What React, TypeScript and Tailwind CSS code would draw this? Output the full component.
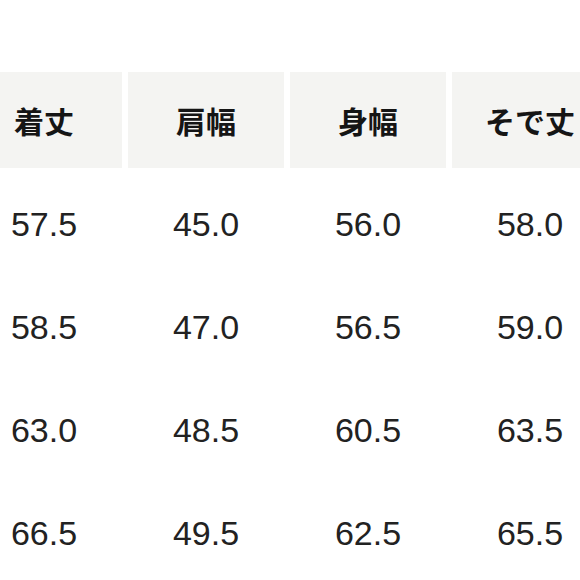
const headers = ["着丈", "肩幅", "身幅", "そで丈"]

const rows = [
  ["57.5", "45.0", "56.0", "58.0"],
  ["58.5", "47.0", "56.5", "59.0"],
  ["63.0", "48.5", "60.5", "63.5"],
  ["66.5", "49.5", "62.5", "65.5"],
]

export default function App() {
  return (
    <div className="w-[580px] h-[580px] overflow-hidden bg-white">
      <div className="pt-[72px] -ml-[34px] w-[642px]">
        {/* Header */}
        <div className="grid grid-cols-[156px_156px_156px_156px] gap-x-[6px] h-[96px]">
          {headers.map((h) => (
            <div
              key={h}
              className="flex items-center justify-center bg-[#f4f4f2] text-[30px] font-bold text-[#151515] font-['Noto_Sans_CJK_JP',sans-serif]"
            >
              {h}
            </div>
          ))}
        </div>

        {/* Rows */}
        <div className="mt-[5px] flex flex-col">
          {rows.map((row, i) => (
            <div key={i} className="grid grid-cols-[156px_156px_156px_156px] gap-x-[6px] h-[103px]">
              {row.map((v, j) => (
                <div
                  key={j}
                  className="flex items-center justify-center text-[34px] text-[#222] font-['Liberation_Sans',Arial,sans-serif]"
                >
                  {v}
                </div>
              ))}
            </div>
          ))}
        </div>
      </div>
    </div>
  )
}
